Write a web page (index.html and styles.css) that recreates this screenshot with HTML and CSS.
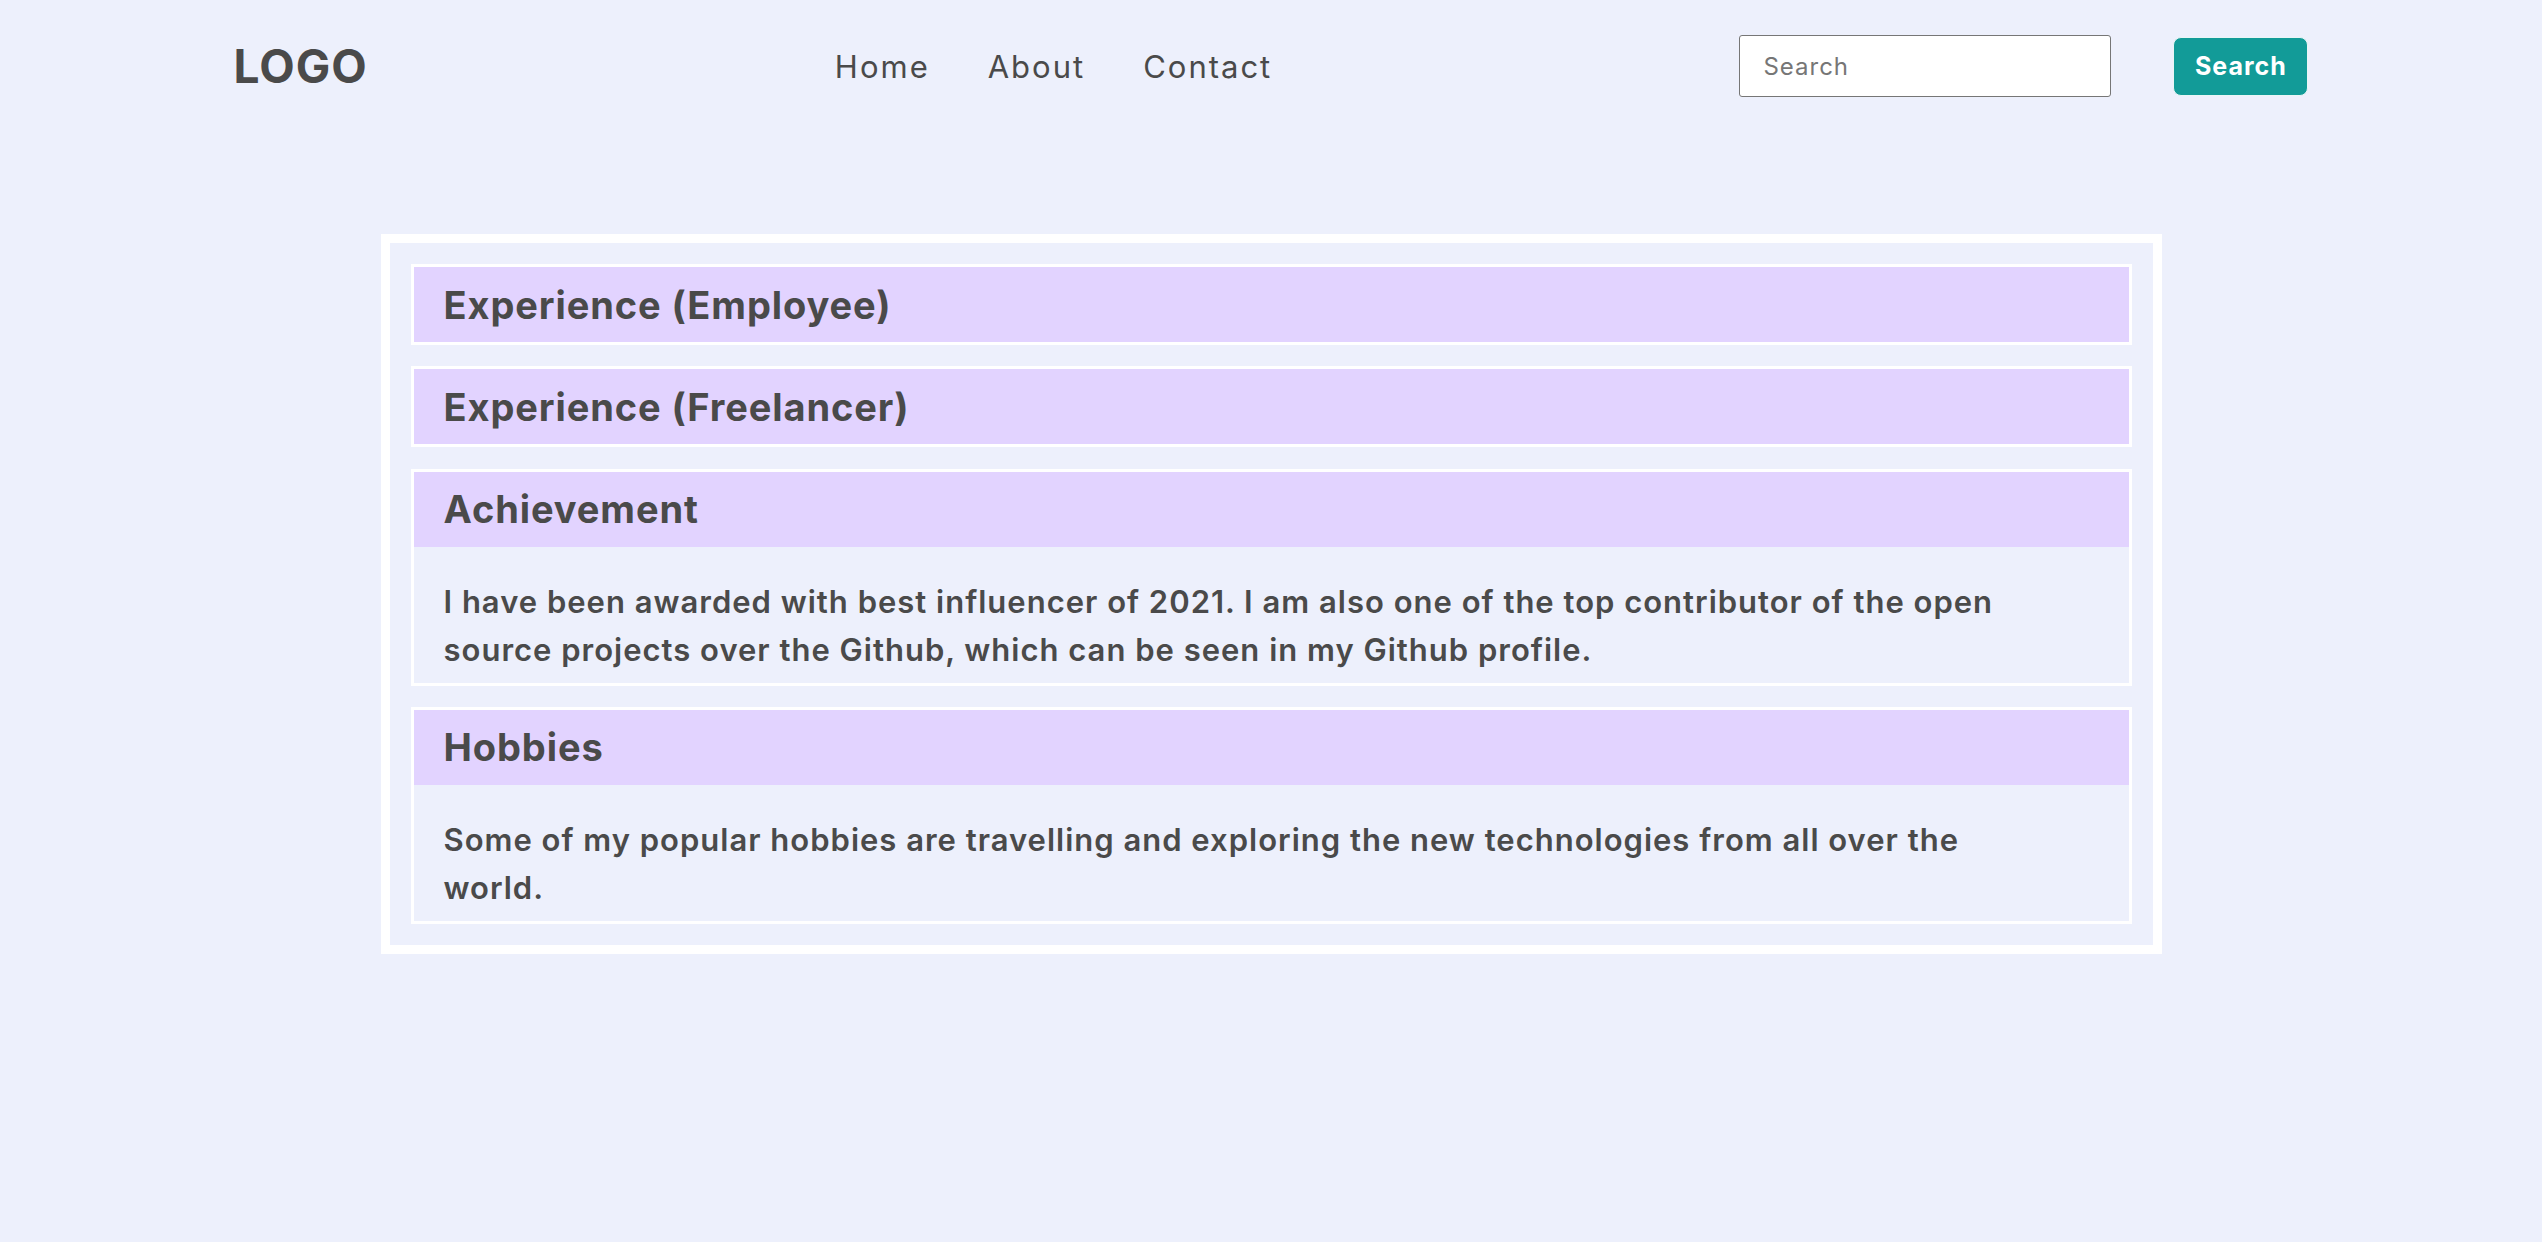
FILE: index.html
```html
<!DOCTYPE html>
<html lang="en">
<head>
<meta charset="utf-8">
<title>Profile</title>
<link rel="stylesheet" href="styles.css">
</head>
<body>
<header class="topbar">
  <div class="logo">LOGO</div>
  <nav class="nav">
    <a class="nav-link" href="#">Home</a>
    <a class="nav-link" href="#">About</a>
    <a class="nav-link" href="#">Contact</a>
  </nav>
  <form class="search">
    <input class="search-input" type="text" placeholder="Search">
    <button class="search-btn" type="button">Search</button>
  </form>
</header>
<main class="main">
  <section class="panel">
    <div class="item">
      <h2 class="item-title">Experience (Employee)</h2>
    </div>
    <div class="item">
      <h2 class="item-title">Experience (Freelancer)</h2>
    </div>
    <div class="item">
      <h2 class="item-title">Achievement</h2>
      <p class="item-body">I have been awarded with best influencer of 2021. I am also one of the top contributor of the open source projects over the Github, which can be seen in my Github profile.</p>
    </div>
    <div class="item">
      <h2 class="item-title">Hobbies</h2>
      <p class="item-body">Some of my popular hobbies are travelling and exploring the new technologies from all over the world.</p>
    </div>
  </section>
</main>
</body>
</html>
```
FILE: styles.css
```css
* { box-sizing: border-box; }
html, body { margin: 0; padding: 0; }
body {
  background: #edf0fc;
  color: #4a4a4a;
  font-family: Inter, "Open Sans", "Liberation Sans", sans-serif;
}
.topbar {
  height: 132px;
  display: flex;
  align-items: center;
  justify-content: space-around;
}
.logo {
  font-size: 46px;
  font-weight: 700;
  letter-spacing: 1px;
  color: #4a4a4a;
}
.nav {
  display: flex;
  gap: 58px;
}
.nav-link {
  font-size: 31px;
  font-weight: 400;
  letter-spacing: 2px;
  color: #4a4a4a;
  text-decoration: none;
}
.search {
  display: flex;
  align-items: center;
  margin: 0;
}
.search-input {
  width: 372px;
  height: 62px;
  border: 1px solid #767676;
  border-radius: 3px;
  background: #fff;
  padding: 0 23px;
  font-family: inherit;
  font-size: 24px;
  letter-spacing: 1px;
  color: #4a4a4a;
}
.search-input::placeholder { color: #767676; }
.search-btn {
  margin-left: 62px;
  width: 135px;
  height: 59px;
  border: 1px solid #e9f6f5;
  border-radius: 8px;
  background: #129b98;
  color: #fff;
  font-family: inherit;
  font-size: 25px;
  font-weight: 700;
  letter-spacing: 1px;
}
.main {
  padding-top: 102px;
}
.panel {
  width: 1781px;
  margin: 0 auto;
  border: 9px solid #fff;
  padding: 21px;
  display: flex;
  flex-direction: column;
  gap: 21.3px;
}
.item {
  border: 3px solid #fff;
}
.item-title {
  margin: 0;
  height: 75px;
  display: flex;
  align-items: center;
  padding: 0 30px;
  background: #e2d3ff;
  font-size: 38px;
  font-weight: 700;
  letter-spacing: 0.9px;
  color: #4a4a4a;
}
.item-body {
  margin: 0;
  padding: 31px 72px 9px 30px;
  font-size: 31px;
  line-height: 48px;
  font-weight: 600;
  letter-spacing: 1px;
  color: #4a4a4a;
}
```
